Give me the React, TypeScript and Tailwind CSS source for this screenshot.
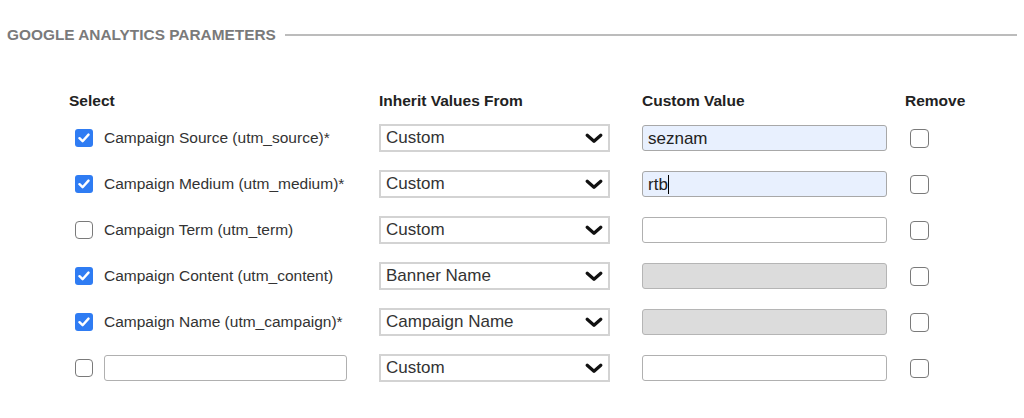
type Row = {
  checked: boolean
  label?: string
  source: string
  value?: string
  disabled?: boolean
  caret?: boolean
}

const rows: Row[] = [
  { checked: true, label: "Campaign Source (utm_source)*", source: "Custom", value: "seznam" },
  { checked: true, label: "Campaign Medium (utm_medium)*", source: "Custom", value: "rtb", caret: true },
  { checked: false, label: "Campaign Term (utm_term)", source: "Custom" },
  { checked: true, label: "Campaign Content (utm_content)", source: "Banner Name", disabled: true },
  { checked: true, label: "Campaign Name (utm_campaign)*", source: "Campaign Name", disabled: true },
  { checked: false, source: "Custom" },
]

function Checkbox({ checked, big }: { checked: boolean; big?: boolean }) {
  if (checked) {
    return (
      <div className="w-[18px] h-[18px] rounded-[3px] bg-[#2f7cf3] flex items-center justify-center shrink-0">
        <svg width="12" height="10" viewBox="0 0 12 10" fill="none">
          <path d="M1.5 5.2 L4.6 8.2 L10.5 1.6" stroke="white" strokeWidth="2.4" strokeLinecap="round" strokeLinejoin="round" />
        </svg>
      </div>
    )
  }
  return (
    <div
      className={`${big ? "w-[19px] h-[19px]" : "w-[18px] h-[18px]"} rounded-[4px] border-[1.5px] border-[#7a7a7a] bg-white shrink-0`}
    />
  )
}

function Select({ value }: { value: string }) {
  return (
    <div className="w-[231px] h-[28px] border-2 border-[#d3d3d3] bg-white flex items-center justify-between pl-[5px] pr-[5px]">
      <span className="text-[17px] text-[#333]">{value}</span>
      <svg width="18" height="11" viewBox="0 0 18 11" fill="none">
        <path d="M2.2 2.2 L9 8.3 L15.8 2.2" stroke="#111" strokeWidth="3.2" strokeLinecap="round" strokeLinejoin="round" />
      </svg>
    </div>
  )
}

function TextBox({ value, disabled, caret, width }: { value?: string; disabled?: boolean; caret?: boolean; width: string }) {
  const filled = !!value
  return (
    <div
      className={`${width} h-[26px] rounded-[3px] border-[1.5px] flex items-center px-[5px] ${
        disabled ? "bg-[#dcdcdc] border-[#b5b5b5]" : filled ? "bg-[#e8f0fe] border-[#a8a8a8]" : "bg-white border-[#b0b0b0]"
      }`}
    >
      <span className="text-[17px] text-[#222] leading-none">{value}</span>
      {caret && <span className="w-[1.5px] h-[19px] bg-black" />}
    </div>
  )
}

export default function App() {
  return (
    <div className="w-[1024px] h-[418px] bg-white font-['Liberation_Sans',Arial,sans-serif] pt-[26px] px-[7px]">
      <div className="flex items-center h-[18px]">
        <h2 className="text-[15.4px] font-bold text-[#7a7a7a]">GOOGLE ANALYTICS PARAMETERS</h2>
        <div className="flex-1 h-[2px] bg-[#bcbcbc] ml-[9px]" />
      </div>

      <div className="mt-[43px] pl-[62px] grid grid-cols-[310px_263px_263px_auto]">
        <div className="h-[28px] flex items-center text-[15.5px] font-bold text-[#222]">Select</div>
        <div className="h-[28px] flex items-center text-[15.5px] font-bold text-[#222]">Inherit Values From</div>
        <div className="h-[28px] flex items-center text-[15.5px] font-bold text-[#222]">Custom Value</div>
        <div className="h-[28px] flex items-center text-[15.5px] font-bold text-[#222]">Remove</div>

        {rows.map((row, i) => (
          <div key={i} className="contents">
            <div className="h-[46px] flex items-center gap-[11px] pl-[6px]">
              <Checkbox checked={row.checked} />
              {row.label ? (
                <span className="text-[15.5px] text-[#333]">{row.label}</span>
              ) : (
                <TextBox width="w-[243px]" />
              )}
            </div>
            <div className="h-[46px] flex items-center">
              <Select value={row.source} />
            </div>
            <div className="h-[46px] flex items-center">
              <TextBox width="w-[245px]" value={row.value} disabled={row.disabled} caret={row.caret} />
            </div>
            <div className="h-[46px] flex items-center pl-[5px]">
              <Checkbox checked={false} big />
            </div>
          </div>
        ))}
      </div>
    </div>
  )
}
